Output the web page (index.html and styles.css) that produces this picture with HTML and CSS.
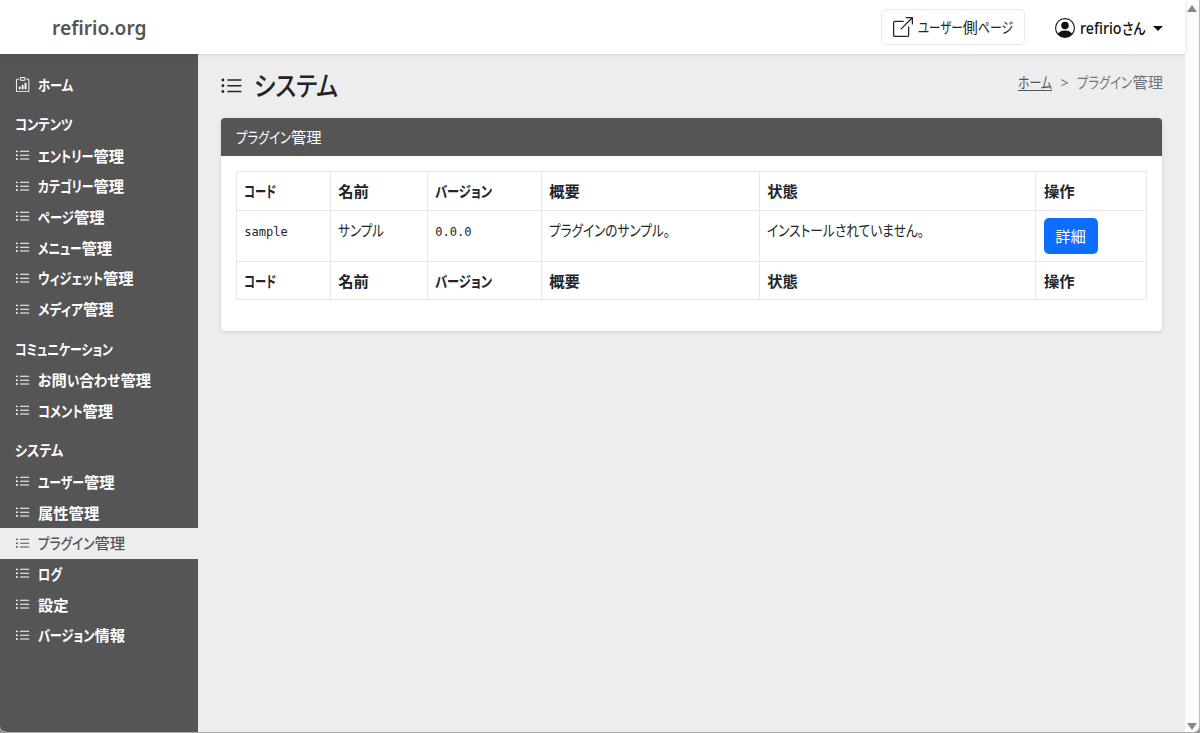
FILE: index.html
```html
<!DOCTYPE html>
<html lang="ja">
<head>
    <meta charset="UTF-8">
    <title>プラグイン管理 | refirio.org</title>
    <link rel="stylesheet" href="styles.css">
</head>
<body>
    <svg class="symbols" aria-hidden="true">
        <symbol id="list" viewBox="0 0 16 16">
            <path fill-rule="evenodd" d="M5 11.5a.5.5 0 0 1 .5-.5h9a.5.5 0 0 1 0 1h-9a.5.5 0 0 1-.5-.5zm0-4a.5.5 0 0 1 .5-.5h9a.5.5 0 0 1 0 1h-9a.5.5 0 0 1-.5-.5zm0-4a.5.5 0 0 1 .5-.5h9a.5.5 0 0 1 0 1h-9a.5.5 0 0 1-.5-.5zm-3 1a1 1 0 1 0 0-2 1 1 0 0 0 0 2zm0 4a1 1 0 1 0 0-2 1 1 0 0 0 0 2zm0 4a1 1 0 1 0 0-2 1 1 0 0 0 0 2z"/>
        </symbol>
        <symbol id="clipboard" viewBox="0 0 16 16">
            <path d="M4 11a1 1 0 1 1 2 0v1a1 1 0 1 1-2 0v-1zm6-4a1 1 0 1 1 2 0v5a1 1 0 1 1-2 0V7zM7 9a1 1 0 0 1 2 0v3a1 1 0 1 1-2 0V9z"/>
            <path d="M4 1.5H3a2 2 0 0 0-2 2V14a2 2 0 0 0 2 2h10a2 2 0 0 0 2-2V3.500a2 2 0 0 0-2-2h-1v1h1a1 1 0 0 1 1 1V14a1 1 0 0 1-1 1H3a1 1 0 0 1-1-1V3.500a1 1 0 0 1 1-1h1v-1z"/>
            <path d="M9.500 1a.5.5 0 0 1 .5.5v1a.5.5 0 0 1-.5.5h-3a.5.5 0 0 1-.5-.5v-1a.5.5 0 0 1 .5-.5h3zm-3-1A1.500 1.500 0 0 0 5 1.500v1A1.500 1.500 0 0 0 6.500 4h3A1.500 1.500 0 0 0 11 2.500v-1A1.500 1.500 0 0 0 9.500 0h-3z"/>
        </symbol>
        <symbol id="external" viewBox="0 0 16 16">
            <path fill-rule="evenodd" d="M8.636 3.500a.5.5 0 0 0-.5-.5H1.500A1.500 1.500 0 0 0 0 4.500v10A1.500 1.500 0 0 0 1.500 16h10a1.500 1.500 0 0 0 1.500-1.500V7.864a.5.5 0 0 0-1 0V14.500a.5.5 0 0 1-.5.5h-10a.5.5 0 0 1-.5-.5v-10a.5.5 0 0 1 .5-.5h6.636a.5.5 0 0 0 .5-.5z"/>
            <path fill-rule="evenodd" d="M16 .5a.5.5 0 0 0-.5-.5h-5a.5.5 0 0 0 0 1h3.793L6.146 9.146a.5.5 0 1 0 .708.708L15 1.707V5.500a.5.5 0 0 0 1 0v-5z"/>
        </symbol>
        <symbol id="person" viewBox="0 0 16 16">
            <path d="M11 6a3 3 0 1 1-6 0 3 3 0 0 1 6 0z"/>
            <path fill-rule="evenodd" d="M0 8a8 8 0 1 1 16 0A8 8 0 0 1 0 8zm8-7a7 7 0 0 0-5.468 11.370C3.242 11.226 4.805 10 8 10s4.757 1.225 5.468 2.370A7 7 0 0 0 8 1z"/>
        </symbol>
    </svg>

    <div class="window">
        <div class="page">
            <header class="navbar">
                <a class="brand">refirio.org</a>
                <div class="navbar-menu">
                    <a class="btn-site"><svg><use href="#external"/></svg><span><span class="k" data-width="44.5">ユーザー</span>側<span class="k" data-width="35">ページ</span></span></a>
                    <a class="user"><svg><use href="#person"/></svg><span><span class="k" data-width="41.5">refirio</span><span class="k" data-width="23.5">さん</span></span><i class="caret"></i></a>
                </div>
            </header>

            <div class="container">
                <nav class="sidebar">
                    <ul>
                        <li><svg><use href="#clipboard"/></svg><span class="k" data-width="35">ホーム</span></li>
                    </ul>
                    <h2><span class="k" data-width="58">コンテンツ</span></h2>
                    <ul>
                        <li><svg><use href="#list"/></svg><span class="k" data-width="55.5">エントリー</span>管理</li>
                        <li><svg><use href="#list"/></svg><span class="k" data-width="55.5">カテゴリー</span>管理</li>
                        <li><svg><use href="#list"/></svg><span class="k" data-width="36">ページ</span>管理</li>
                        <li><svg><use href="#list"/></svg><span class="k" data-width="43.5">メニュー</span>管理</li>
                        <li><svg><use href="#list"/></svg><span class="k" data-width="65">ウィジェット</span>管理</li>
                        <li><svg><use href="#list"/></svg><span class="k" data-width="45">メディア</span>管理</li>
                    </ul>
                    <h2><span class="k" data-width="98">コミュニケーション</span></h2>
                    <ul>
                        <li><svg><use href="#list"/></svg><span class="k" data-width="13.5">お</span>問<span class="k" data-width="12.3">い</span>合<span class="k" data-width="26">わせ</span>管理</li>
                        <li><svg><use href="#list"/></svg><span class="k" data-width="44.5">コメント</span>管理</li>
                    </ul>
                    <h2><span class="k" data-width="48">システム</span></h2>
                    <ul>
                        <li><svg><use href="#list"/></svg><span class="k" data-width="46">ユーザー</span>管理</li>
                        <li><svg><use href="#list"/></svg>属性管理</li>
                        <li class="active"><svg><use href="#list"/></svg><span class="k" data-width="56.5">プラグイン</span>管理</li>
                        <li><svg><use href="#list"/></svg><span class="k" data-width="24">ログ</span></li>
                        <li><svg><use href="#list"/></svg>設定</li>
                        <li><svg><use href="#list"/></svg><span class="k" data-width="56.5">バージョン</span>情報</li>
                    </ul>
                </nav>

                <main>
                    <div class="heading">
                        <h1><svg><use href="#list"/></svg><span class="k" data-width="84">システム</span></h1>
                        <div class="breadcrumb"><a class="k" data-width="34">ホーム</a><span class="sep">&gt;</span><span><span class="k" data-width="55">プラグイン</span>管理</span></div>
                    </div>

                    <section class="card">
                        <div class="card-header"><span class="k" data-width="55">プラグイン</span>管理</div>
                        <div class="card-body">
                            <table>
                                <colgroup>
                                    <col class="code"><col class="name"><col class="version"><col class="summary"><col class="status"><col>
                                </colgroup>
                                <thead>
                                    <tr><th><span class="k" data-width="32">コード</span></th><th>名前</th><th><span class="k" data-width="57">バージョン</span></th><th>概要</th><th>状態</th><th>操作</th></tr>
                                </thead>
                                <tbody>
                                    <tr>
                                        <td><code>sample</code></td>
                                        <td><span class="k" data-width="46">サンプル</span></td>
                                        <td><code>0.0.0</code></td>
                                        <td><span class="k" data-width="121">プラグインのサンプル。</span></td>
                                        <td><span class="k" data-width="157">インストールされていません。</span></td>
                                        <td><a class="btn">詳細</a></td>
                                    </tr>
                                </tbody>
                                <tfoot>
                                    <tr><th><span class="k" data-width="32">コード</span></th><th>名前</th><th><span class="k" data-width="57">バージョン</span></th><th>概要</th><th>状態</th><th>操作</th></tr>
                                </tfoot>
                            </table>
                        </div>
                    </section>
                </main>
            </div>
        </div>
        <div class="scrollbar"><i class="up"></i><i class="down"></i></div>
    </div>

    <script src="script.js"></script>
</body>
</html>
```
FILE: styles.css
```css
*{
    box-sizing: border-box;
}
body{
    margin: 0;
    height: 100vh;
    overflow: hidden;
    background: #8593a3;
    color: #212529;
    font-family: "Noto Sans", "Noto Sans CJK JP", sans-serif;
    font-size: 15.3px;
    line-height: 23px;
}
svg{
    fill: currentColor;
    flex: none;
}
.symbols{
    display: none;
}
/* condensed runs, scaled in script.js */
.k{
    display: inline-block;
    font-feature-settings: "palt";
    transform-origin: 0 50%;
    white-space: nowrap;
}
.window{
    display: flex;
    height: 100vh;
    border-right: 1px solid #bbb;
    border-bottom: 1px solid #aaa;
    border-radius: 0 0 7px 7px;
    overflow: hidden;
    background: #ededed;
}
.page{
    flex: 1;
    display: flex;
    flex-direction: column;
}
.navbar{
    display: flex;
    justify-content: space-between;
    align-items: center;
    height: 54px;
    padding: 0 22px 0 52px;
    background: white;
    box-shadow: 0 1px 4px rgba(0, 0, 0, 0.12);
    z-index: 1;
}
.brand{
    padding-top: 1px;
    color: #555;
    font-size: 19.2px;
    font-weight: 600;
}
.navbar-menu{
    display: flex;
    align-items: center;
    gap: 30px;
}
.btn-site{
    display: flex;
    align-items: center;
    gap: 5px;
    width: 144px;
    height: 36px;
    padding-left: 11px;
    border: 1px solid #e9e9e9;
    border-radius: 5px;
    white-space: nowrap;
}
.btn-site svg{
    width: 20px;
    height: 20px;
}
.user{
    display: flex;
    align-items: center;
    padding-top: 2px;
    font-weight: 500;
    color: #111;
}
.user svg{
    width: 20px;
    height: 20px;
    margin-right: 5px;
}
.caret{
    margin-left: 8px;
    border: 5px solid transparent;
    border-top: 5px solid #111;
    border-bottom: 0;
}
.container{
    flex: 1;
    display: flex;
}
.sidebar{
    width: 198px;
    padding-top: 15.3px;
    background: #555;
    color: white;
    font-weight: 700;
}
.sidebar ul{
    margin: 0;
    padding: 0;
    list-style: none;
}
.sidebar li{
    display: flex;
    align-items: center;
    height: 30.7px;
    padding: 1px 0 0 15px;
    white-space: nowrap;
}
.sidebar li svg{
    width: 15.3px;
    height: 15.3px;
    margin: 0 7.7px 1px 0;
}
.sidebar li.active{
    background: #ededed;
    color: #555;
    font-weight: 500;
}
.sidebar h2{
    height: 40.4px;
    margin: 0;
    padding: 13px 0 0 15px;
    font-size: 14.5px;
    line-height: 23px;
    font-weight: 700;
}
main{
    flex: 1;
    padding: 0 23px;
}
.heading{
    display: flex;
    justify-content: space-between;
    height: 64px;
    padding-top: 15px;
}
h1{
    display: flex;
    align-items: center;
    gap: 11px;
    height: 34px;
    margin: 0 0 0 -1px;
    font-size: 26.8px;
    font-weight: 500;
}
h1 svg{
    width: 23px;
    height: 23px;
}
h1 .k{
    margin-bottom: 2px;
}
.breadcrumb{
    display: flex;
    height: 26px;
    align-items: center;
    margin-right: -1px;
    color: #6c757d;
}
.breadcrumb a{
    color: #555;
    text-decoration: underline;
    text-underline-offset: 2px;
}
.sep{
    margin: 0 9px 0 8px;
    font-size: 14px;
}
.card{
    height: 213px;
    border-radius: 4px;
    background: white;
    box-shadow: 0 1px 4px rgba(0, 0, 0, 0.12);
    overflow: hidden;
}
.card-header{
    height: 38px;
    padding: 8px 15px;
    background: #555;
    color: white;
}
.card-body{
    padding: 15px;
}
table{
    width: 911px;
    border-collapse: collapse;
    table-layout: fixed;
}
.code{
    width: 94px;
}
.name{
    width: 97px;
}
.version{
    width: 114px;
}
.summary{
    width: 218px;
}
.status{
    width: 276px;
}
th,td{
    height: 39px;
    padding: 8px 7.3px 6px;
    border: 1px solid #e5e8ea;
    text-align: left;
    vertical-align: top;
    white-space: nowrap;
}
th{
    font-weight: 600;
}
th:last-child{
    padding-left: 8px;
}
tfoot th{
    height: 38px;
}
tbody td{
    height: 51px;
}
tbody td:last-child{
    padding: 7px 7.5px;
}
code{
    font-family: "DejaVu Sans Mono", monospace;
    font-size: 12px;
}
.btn{
    display: block;
    width: 54px;
    height: 36px;
    border-radius: 5px;
    background: #0d6efd;
    color: white;
    line-height: 36px;
    text-align: center;
}
.scrollbar{
    display: flex;
    flex-direction: column;
    justify-content: space-between;
    align-items: center;
    width: 14px;
    padding: 5px 0 2px;
    background: #fcfcfc;
}
.scrollbar i{
    border: 5px solid transparent;
}
.scrollbar .up{
    border-top: 0;
    border-bottom: 7px solid #888;
}
.scrollbar .down{
    border-bottom: 0;
    border-top: 7px solid #888;
}
```
FILE: script.js
```js
// squeeze each run to its own width
document.querySelectorAll('.k').forEach(function(el){
    const natural = el.getBoundingClientRect().width;
    const width = parseFloat(el.dataset.width);
    el.style.transform = 'scaleX(' + (width / natural) + ')';
    el.style.marginRight = (width - natural) + 'px';
});
```
